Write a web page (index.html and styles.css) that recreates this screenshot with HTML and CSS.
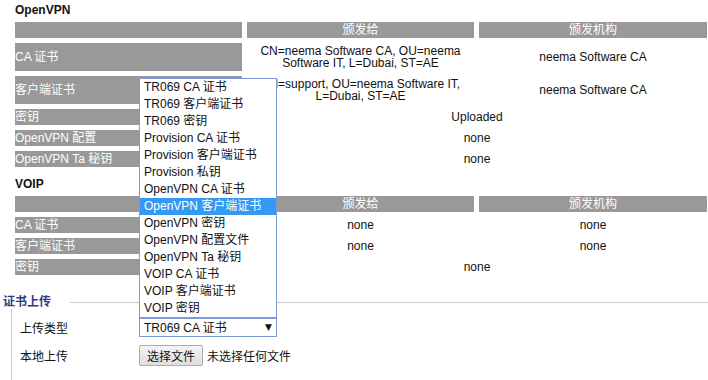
FILE: index.html
```html
<!DOCTYPE html>
<html lang="zh">
<head>
  <meta charset="UTF-8">
  <title>证书管理</title>
  <link rel="stylesheet" href="styles.css">
</head>
<body>
<div class="section-title">OpenVPN</div>
<table class="cert-table">
  <colgroup><col class="c1"><col class="c2"><col class="c3"></colgroup>
  <tr>
    <th></th>
    <th>颁发给</th>
    <th>颁发机构</th>
  </tr>
  <tr>
    <td class="name">CA 证书</td>
    <td>CN=neema Software CA, OU=neema Software IT, L=Dubai, ST=AE</td>
    <td>neema Software CA</td>
  </tr>
  <tr>
    <td class="name">客户端证书</td>
    <td>CN=support, OU=neema Software IT, L=Dubai, ST=AE</td>
    <td>neema Software CA</td>
  </tr>
  <tr>
    <td class="name">密钥</td>
    <td colspan="2">Uploaded</td>
  </tr>
  <tr>
    <td class="name">OpenVPN 配置</td>
    <td colspan="2">none</td>
  </tr>
  <tr>
    <td class="name">OpenVPN Ta 秘钥</td>
    <td colspan="2">none</td>
  </tr>
</table>

<div class="section-title">VOIP</div>
<table class="cert-table">
  <colgroup><col class="c1"><col class="c2"><col class="c3"></colgroup>
  <tr>
    <th></th>
    <th>颁发给</th>
    <th>颁发机构</th>
  </tr>
  <tr>
    <td class="name">CA 证书</td>
    <td>none</td>
    <td>none</td>
  </tr>
  <tr>
    <td class="name">客户端证书</td>
    <td>none</td>
    <td>none</td>
  </tr>
  <tr>
    <td class="name">密钥</td>
    <td colspan="2">none</td>
  </tr>
</table>

<fieldset class="upload">
  <legend>证书上传</legend>
  <div class="upload-grid">
    <label for="cert-type">上传类型</label>
    <div class="select-wrap">
      <select id="cert-type">
        <option>TR069 CA 证书</option>
      </select>
      <span class="arrow">▼</span>
      <ul class="dropdown">
        <li>TR069 CA 证书</li>
        <li>TR069 客户端证书</li>
        <li>TR069 密钥</li>
        <li>Provision CA 证书</li>
        <li>Provision 客户端证书</li>
        <li>Provision 私钥</li>
        <li>OpenVPN CA 证书</li>
        <li class="active">OpenVPN 客户端证书</li>
        <li>OpenVPN 密钥</li>
        <li>OpenVPN 配置文件</li>
        <li>OpenVPN Ta 秘钥</li>
        <li>VOIP CA 证书</li>
        <li>VOIP 客户端证书</li>
        <li>VOIP 密钥</li>
      </ul>
    </div>

    <label>本地上传</label>
    <div class="file-row">
      <button type="button" class="file-btn">选择文件</button>
      <span class="file-name">未选择任何文件</span>
    </div>
  </div>
</fieldset>
</body>
</html>
```

FILE: styles.css
```css
html {
  overflow: hidden;
}
body {
  margin: 0;
  font-family: "Liberation Sans", "Noto Sans CJK SC", sans-serif;
  font-size: 12px;
  color: #111;
}

.section-title {
  font-weight: bold;
  line-height: 14px;
  padding: 3px 0 0 15px;
}

.cert-table {
  margin: 0 0 2px 10px;
  width: 702px;
  table-layout: fixed;
  border-spacing: 5px;
}
.cert-table .c1 { width: 227px; }
.cert-table .c2 { width: 227px; }
.cert-table .c3 { width: 228px; }

.cert-table th,
.cert-table td {
  padding: 2px 0;
  height: 12px;
  line-height: 12px;
  text-align: center;
  vertical-align: middle;
}
.cert-table th {
  background: #999;
  color: #fff;
  font-weight: normal;
}
.cert-table td.name {
  background: #999;
  color: #fff;
  text-align: left;
}

.upload {
  margin: 15px 0 0 11px;
  padding: 0 0 0 8px;
  border: none;
  border-top: 1px solid #ccc;
  border-left: 1px solid #ccc;
  min-height: 90px;
}
.upload legend {
  margin-left: -17px;
  padding: 0 19px 0 0;
  line-height: 14px;
  color: #2e3a86;
  font-weight: bold;
}

.upload-grid {
  margin-top: 9px;
  display: grid;
  grid-template-columns: 119px auto;
  row-gap: 8px;
  align-items: center;
}

.select-wrap {
  position: relative;
  width: 138px;
}
.select-wrap select {
  appearance: none;
  -webkit-appearance: none;
  display: block;
  width: 138px;
  height: 19px;
  margin: 0;
  padding: 0 0 0 4px;
  border: 1px solid #7a9bd3;
  border-radius: 0;
  background: #fff;
  font-family: inherit;
  font-size: 12px;
  color: #111;
  outline: none;
}
.select-wrap .arrow {
  position: absolute;
  right: 5px;
  top: 4px;
  font-family: "DejaVu Sans", sans-serif;
  font-size: 9px;
  line-height: 10px;
  color: #111;
  pointer-events: none;
}

.dropdown {
  position: absolute;
  left: 0;
  bottom: 100%;
  width: 138px;
  margin: 0;
  padding: 0;
  list-style: none;
  background: #fff;
  border: 1px solid #7a9bd3;
  box-sizing: border-box;
}
.dropdown li {
  height: 17px;
  line-height: 17px;
  padding-left: 4px;
  white-space: nowrap;
}
.dropdown li.active {
  background: #3399f3;
  color: #fff;
}

.file-row {
  display: flex;
  align-items: center;
  gap: 4px;
}
.file-btn {
  height: 21px;
  padding: 0 7px;
  border: 1px solid #adadad;
  border-radius: 2px;
  background: linear-gradient(#f4f4f4, #dedede);
  font-family: inherit;
  font-size: 12px;
  color: #111;
}
```
